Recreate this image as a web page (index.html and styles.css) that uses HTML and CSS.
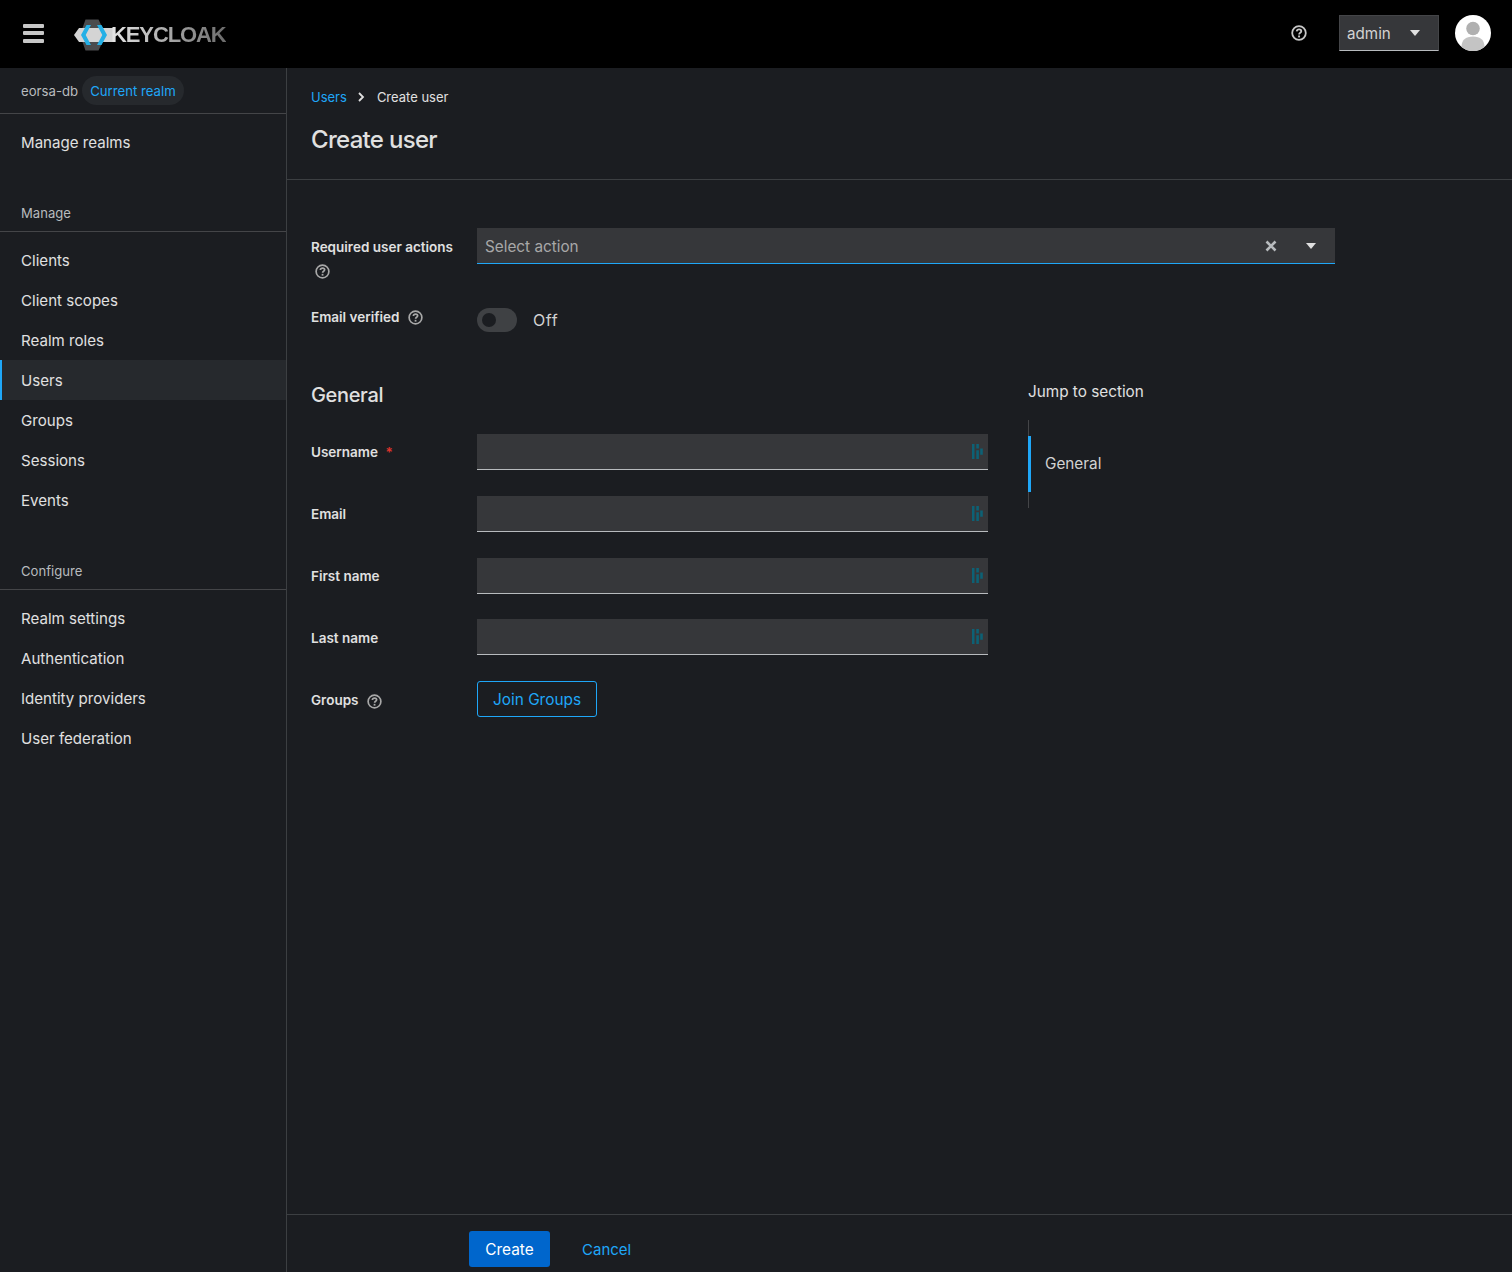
FILE: index.html
```html
<!DOCTYPE html>
<html>
<head>
  <title>Keycloak - Create user</title>
  <meta name="viewport" content="width=device-width, initial-scale=1.0">
  <link rel="stylesheet" href="styles.css">
</head>

<body>

<svg class="defs">
  <symbol id="help" viewBox="0 0 16 16">
    <circle cx="8" cy="8" r="6.8" fill="none" stroke="currentColor" stroke-width="1.800"/>
    <path d="M5.700 6.400c.1-1.300 1.100-2.100 2.400-2.100s2.200.8 2.200 1.900c0 1.600-2.200 1.500-2.200 3.200" fill="none" stroke="currentColor" stroke-width="1.800"/>
    <rect x="7.100" y="10.500" width="1.900" height="1.900" fill="currentColor"/>
  </symbol>
  <symbol id="caret" viewBox="0 0 10 6">
    <path d="M0 0h10L5 6z" fill="currentColor"/>
  </symbol>
  <symbol id="pass" viewBox="0 0 12 15">
    <path d="M1 0h2.500v15H1zM5.300 0h2.600v4.500H5.300zM5.300 6.200h2.600V15H5.300zM9.200 4.500h2.600v6.200H9.200z" fill="#0d6175"/>
  </symbol>
</svg>

<header class="topbar">
  <div class="topbar-left">
    <button class="burger"><span></span><span></span><span></span></button>
    <div class="logo">
      <svg class="logo-mark" width="40" height="32" viewBox="0 0 40 32">
        <path d="M6 16 11.500 0.500H24.500L32 16 24.500 31.500H11.500z" fill="#4a4b4d"/>
        <path d="M0 16 5 9H39V23H5z" fill="#d4d4d4"/>
        <path d="M12.500 6 7 16l5.500 10h4.500L11.700 16 17 6z" fill="#24b0e6"/>
        <path d="M23 6l5.300 10L23 26h4.500L33 16 27.500 6z" fill="#24b0e6"/>
      </svg>
      <span class="logo-text">KEYCLOAK</span>
    </div>
  </div>
  <div class="topbar-right">
    <svg class="help-top"><use href="#help"/></svg>
    <div class="user-menu">
      <span>admin</span>
      <svg class="caret"><use href="#caret"/></svg>
    </div>
    <svg class="avatar" viewBox="0 0 36 36">
      <circle cx="18" cy="18" r="18" fill="#fff"/>
      <circle cx="18" cy="13.500" r="6.800" fill="#b0b0b0"/>
      <path d="M6.500 32c0-7 4-10.500 11.500-10.500S29.500 25 29.500 32A18 18 0 0 1 6.500 32z" fill="#c4c4c4"/>
    </svg>
  </div>
</header>

<div class="layout">
  <nav class="sidebar">
    <div class="realm">
      <span class="realm-name">eorsa-db</span>
      <span class="realm-badge">Current realm</span>
    </div>
    <ul class="nav-list">
      <li>Manage realms</li>
    </ul>
    <div class="nav-title">Manage</div>
    <ul class="nav-list">
      <li>Clients</li>
      <li>Client scopes</li>
      <li>Realm roles</li>
      <li class="active">Users</li>
      <li>Groups</li>
      <li>Sessions</li>
      <li>Events</li>
    </ul>
    <div class="nav-title">Configure</div>
    <ul class="nav-list">
      <li>Realm settings</li>
      <li>Authentication</li>
      <li>Identity providers</li>
      <li>User federation</li>
    </ul>
  </nav>

  <main class="main">
    <div class="page-head">
      <div class="breadcrumb">
        <a>Users</a>
        <svg width="8" height="10" viewBox="0 0 8 10"><path d="M2 1l4 4-4 4" fill="none" stroke="#e0e0e0" stroke-width="1.800"/></svg>
        <span>Create user</span>
      </div>
      <h1>Create user</h1>
    </div>

    <div class="content">
      <div class="form-row row-actions">
        <label class="lbl">Required user actions <svg class="help wrap"><use href="#help"/></svg></label>
        <div class="select">
          <span class="select-text">Select action</span>
          <svg class="clear" width="12" height="12" viewBox="0 0 12 12"><path d="M1.500 1.500l9 9M10.500 1.500l-9 9" stroke="#b8bbbe" stroke-width="2.600"/></svg>
          <svg class="caret"><use href="#caret"/></svg>
        </div>
      </div>

      <div class="form-row row-verified">
        <label class="lbl">Email verified <svg class="help"><use href="#help"/></svg></label>
        <div class="toggle-wrap">
          <span class="toggle"><span class="knob"></span></span>
          <span class="toggle-text">Off</span>
        </div>
      </div>

      <div class="section">
        <div class="section-form">
          <h2>General</h2>
          <div class="form-row">
            <label class="lbl">Username <span class="req">*</span></label>
            <div class="input"><svg class="pass"><use href="#pass"/></svg></div>
          </div>
          <div class="form-row">
            <label class="lbl">Email</label>
            <div class="input"><svg class="pass"><use href="#pass"/></svg></div>
          </div>
          <div class="form-row">
            <label class="lbl">First name</label>
            <div class="input"><svg class="pass"><use href="#pass"/></svg></div>
          </div>
          <div class="form-row">
            <label class="lbl low">Last name</label>
            <div class="input"><svg class="pass"><use href="#pass"/></svg></div>
          </div>
          <div class="form-row">
            <label class="lbl low">Groups <svg class="help groups"><use href="#help"/></svg></label>
            <button class="btn-outline">Join Groups</button>
          </div>
        </div>
        <div class="jump">
          <div class="jump-title">Jump to section</div>
          <div class="jump-list">
            <div class="jump-item">General</div>
          </div>
        </div>
      </div>
    </div>

    <div class="footer">
      <button class="btn-primary">Create</button>
      <a class="btn-link">Cancel</a>
    </div>
  </main>
</div>

</body>
</html>
```

FILE: styles.css
```css
* {
  margin: 0;
  padding: 0;
  box-sizing: border-box;
  font-family: Inter, 'Open Sans', sans-serif;
}

body {
  height: 1272px;
  overflow: hidden;
  background: #1b1d21;
  color: #e0e0e0;
  font-size: 16px;
  display: flex;
  flex-direction: column;
}

ul {
  list-style: none;
}

.defs {
  display: none;
}

.topbar {
  height: 68px;
  background: #000;
  display: flex;
  justify-content: space-between;
  align-items: center;
  padding: 0 21px 2px 23px;
}

.topbar-left {
  display: flex;
  align-items: center;
}

.burger {
  width: 21px;
  height: 19px;
  background: none;
  border: none;
  display: flex;
  flex-direction: column;
  justify-content: space-between;
}

.burger span {
  height: 4px;
  background: #c7c7c7;
  border-radius: 1px;
}

.logo {
  display: flex;
  align-items: center;
  margin: 3px 0 0 30px;
}

.logo-text {
  margin-left: -3px;
  font-family: 'Liberation Sans', sans-serif;
  font-weight: 700;
  font-size: 22px;
  letter-spacing: -1.1px;
  background: linear-gradient(to right, #e6e6e6, #6b6b6b);
  -webkit-background-clip: text;
  background-clip: text;
  color: transparent;
}

.topbar-right {
  display: flex;
  align-items: center;
}

.help-top {
  width: 16px;
  height: 16px;
  color: #c7c7c7;
  margin-right: 32px;
}

.user-menu {
  width: 100px;
  height: 36px;
  background: #36373a;
  border: 1px solid #444548;
  border-bottom-color: #b8bbbe;
  display: flex;
  align-items: center;
  justify-content: space-between;
  padding: 0 18px 0 7px;
  font-size: 15.2px;
  color: #d2d2d2;
}

.caret {
  width: 10px;
  height: 6px;
  color: #e0e0e0;
}

.avatar {
  width: 36px;
  height: 36px;
  margin-left: 16px;
}

.layout {
  flex: 1;
  display: flex;
  min-height: 0;
}

.sidebar {
  width: 287px;
  flex-shrink: 0;
  border-right: 1px solid #3c3f42;
}

.realm {
  height: 46px;
  border-bottom: 1px solid #444548;
  padding: 8px 0 0 21px;
  display: flex;
  align-items: flex-start;
  font-size: 13.2px;
}

.realm-name {
  color: #b8bbbe;
  line-height: 30px;
}

.realm-badge {
  margin-left: 4px;
  height: 29px;
  line-height: 30px;
  padding: 0 8px;
  border-radius: 15px;
  background: #26292d;
  color: #1fa7f8;
}

.nav-list {
  padding: 8px 0 42px;
}

.nav-list li {
  height: 40px;
  line-height: 42px;
  padding-left: 21px;
  font-size: 15.1px;
}

.nav-list li.active {
  background: #26292d;
  box-shadow: inset 2px 0 0 #1fa7f8;
}

.nav-title {
  height: 28px;
  padding-left: 21px;
  font-size: 13.1px;
  color: #b8bbbe;
  border-bottom: 1px solid #444548;
  line-height: 18px;
}

.main {
  flex: 1;
  display: flex;
  flex-direction: column;
}

.page-head {
  height: 112px;
  padding: 20px 24px 0;
  border-bottom: 1px solid #3c3f42;
}

.breadcrumb {
  display: flex;
  align-items: center;
  font-size: 13px;
  height: 18px;
}

.breadcrumb a {
  color: #1fa7f8;
}

.breadcrumb svg {
  margin: 0 12px 0 10px;
}

h1 {
  font-size: 24px;
  font-weight: 500;
  margin-top: 19px;
  letter-spacing: -0.7px;
}

.content {
  flex: 1;
  padding: 48px 24px 0;
}

.form-row {
  display: flex;
  width: 100%;
}

.lbl {
  width: 166px;
  flex-shrink: 0;
  padding: 8px 10px 0 0;
  font-size: 13.5px;
  font-weight: 600;
  line-height: 20px;
}

.lbl.low {
  padding-top: 9px;
}

.row-actions {
  width: 1024px;
  height: 80px;
}

.row-actions .lbl {
  padding-top: 9px;
}

.row-verified {
  height: 71px;
}

.row-verified .lbl {
  padding-top: 0;
  margin-top: -1px;
}

.help {
  width: 15px;
  height: 15px;
  color: #a8a8a8;
  vertical-align: -3px;
  margin-left: 5px;
}

.help.wrap {
  display: block;
  margin: 7px 0 0 4px;
}

.help.groups {
  margin-left: 5px;
  vertical-align: -4px;
}

.select {
  flex: 1;
  height: 36px;
  background: #36373a;
  border-bottom: 1px solid #1fa7f8;
  display: flex;
  align-items: center;
  padding: 0 19px 0 8px;
}

.select-text {
  flex: 1;
  margin-top: 1px;
  font-size: 15.3px;
  color: #a8a8a8;
}

.clear {
  margin-right: 29px;
}

.toggle-wrap {
  display: flex;
  align-items: center;
  height: 24px;
}

.toggle {
  width: 40px;
  height: 24px;
  border-radius: 12px;
  background: #3f4144;
  display: flex;
  align-items: center;
  padding-left: 5px;
}

.knob {
  width: 14px;
  height: 14px;
  border-radius: 50%;
  background: #1b1d21;
}

.toggle-text {
  margin: -1px 0 0 16px;
  font-size: 16px;
  letter-spacing: 0.6px;
  color: #d2d2d2;
}

.section {
  display: flex;
  gap: 40px;
}

.section-form {
  width: 677px;
  flex-shrink: 0;
}

.section-form .form-row {
  margin-bottom: 25.67px;
}

h2 {
  font-size: 20px;
  font-weight: 500;
  line-height: 32px;
  height: 30px;
  margin-bottom: 25.33px;
  letter-spacing: -0.35px;
}

.input {
  flex: 1;
  height: 36px;
  background: #36373a;
  border-bottom: 1px solid #b8bbbe;
  display: flex;
  justify-content: flex-end;
  align-items: center;
  padding-right: 5px;
}

.pass {
  width: 12px;
  height: 15px;
}

.req {
  color: #e0342c;
  margin-left: 4px;
}

.btn-outline {
  width: 120px;
  height: 36px;
  padding-top: 2px;
  background: none;
  border: 1px solid #1fa7f8;
  border-radius: 3px;
  color: #1fa7f8;
  font-size: 15.4px;
}

.jump {
  flex: 1;
}

.jump-title {
  height: 26px;
  line-height: 26px;
  font-size: 15.3px;
  margin-bottom: 15px;
}

.jump-list {
  border-left: 1px solid #444548;
  padding: 16px 0;
}

.jump-item {
  height: 56px;
  line-height: 56px;
  margin-left: -1px;
  border-left: 3px solid #1fa7f8;
  padding-left: 14px;
  font-size: 15.3px;
  color: #d2d2d2;
}

.footer {
  height: 58px;
  border-top: 1px solid #3c3f42;
  padding: 16px 0 0 182px;
  display: flex;
  align-items: flex-start;
}

.btn-primary {
  width: 81px;
  height: 36px;
  background: #0066cc;
  border: none;
  border-radius: 3px;
  color: #fff;
  font-size: 15.4px;
}

.btn-link {
  margin-left: 32px;
  line-height: 38px;
  color: #1fa7f8;
  font-size: 15px;
}
```
